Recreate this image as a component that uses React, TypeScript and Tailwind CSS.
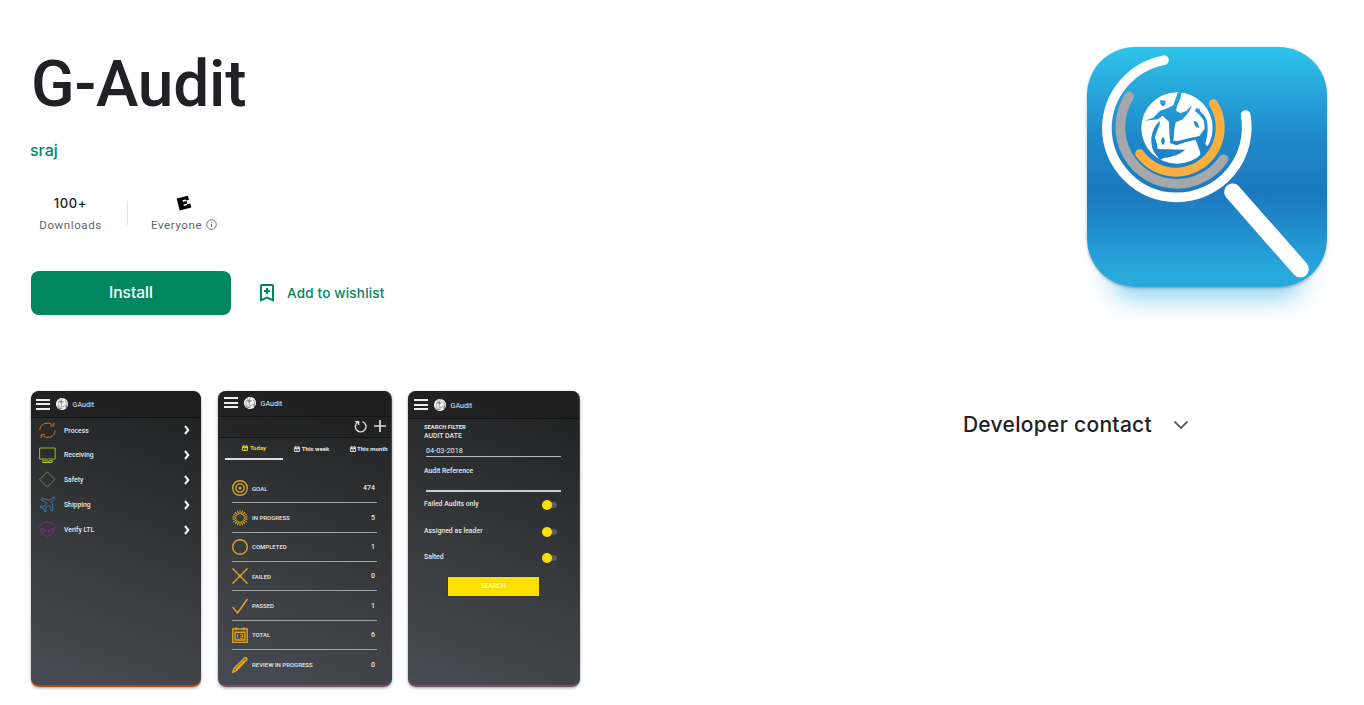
import type { ReactNode } from "react";
import { ChevronDown } from "lucide-react";

const GLOBE_CUTS = [
  "M44 122 L70 113 L90 92 L108 86 L130 76 L143 38 L155 36 Q153 58 142 76 L138 92 L151 99 L169 93 L186 76 Q181 94 158 118 L137 127 L133 150 L130 182 L142 183 Q184 173 208 168 L224 146 L222 124 Q211 104 195 94 L198 84 L210 88 L211 95 Q224 103 230 120 Q238 150 226 190 L228 196 L240 200 L226 224 L212 230 L210 215 L197 179 Q163 186 140 196 L121 190 L118 158 L117 126 L98 107 L84 118 L64 120 Z",
  "M90 122 Q70 138 64 172 Q62 205 76 222 L90 240 L102 234 Q142 230 166 209 L83 207 L81 194 L75 172 L83 148 Q91 136 90 122 Z",
];

function GlobeMask({ id }: { id: string }) {
  return (
    <mask id={id} maskUnits="userSpaceOnUse" x="20" y="20" width="240" height="240">
      <circle cx="141" cy="144" r="107" fill="#fff" />
      <g fill="#000">
        {GLOBE_CUTS.map((d) => (
          <path key={d} d={d} />
        ))}
        <path d="M91 61 Q100 60 107 62 Q108 77 97 79 Q88 71 91 61Z" />
        <path d="M99 170 Q110 182 99 196 Q87 184 99 170Z" />
        <path d="M192 122 Q207 125 207 144 Q190 140 192 122Z" />
      </g>
    </mask>
  );
}

function AppLogo() {
  return (
    <svg viewBox="21 21 720 720" className="block size-60">
      <defs>
        <linearGradient id="sky" x1="0" y1="0" x2="0" y2="1">
          <stop offset="0" stopColor="#2fc5ec" />
          <stop offset="0.14" stopColor="#28addd" />
          <stop offset="0.38" stopColor="#1f88ca" />
          <stop offset="0.61" stopColor="#1c78bf" />
          <stop offset="0.78" stopColor="#2290cd" />
          <stop offset="0.9" stopColor="#27a5d9" />
          <stop offset="1" stopColor="#28a9dc" />
        </linearGradient>
        <GlobeMask id="logo-globe" />
      </defs>
      <rect x="21" y="21" width="720" height="720" fill="url(#sky)" />
      <g fill="none" strokeLinecap="round">
        <path d="M252 60.5 A210 210 0 0 0 80.5 262 A210 210 0 0 0 290.5 472 A210 210 0 0 0 497 225" stroke="#fff" strokeWidth="29" />
        <path d="M148 169.5 A170 170 0 0 0 290.5 431.5 A170 170 0 0 0 430.5 357.5" stroke="#a5a7ab" strokeWidth="29" />
        <path d="M400 191 A134 134 0 0 1 290.5 396.5 A134 134 0 0 1 179 341" stroke="#fbaf3f" strokeWidth="27" />
        <path d="M458 456 L661 687" stroke="#fff" strokeWidth="51" />
      </g>
      <g transform="translate(150 120)">
        <rect x="20" y="20" width="240" height="240" fill="#fff" mask="url(#logo-globe)" />
      </g>
    </svg>
  );
}

function PhoneBar({ id, className }: { id: string; className: string }) {
  return (
    <div className={`flex items-center border-b border-black/40 bg-[#1e1e1f]/60 ${className}`}>
      <div className="flex w-3.5 flex-col gap-[2.5px]">
        <span className="h-[2px] bg-[#eee]" />
        <span className="h-[2px] bg-[#eee]" />
        <span className="h-[2px] bg-[#eee]" />
      </div>
      <svg viewBox="34 37 214 214" className="ml-[6px] size-3">
        <defs>
          <GlobeMask id={id} />
        </defs>
        <circle cx="141" cy="144" r="107" fill="#888" />
        <rect x="20" y="20" width="240" height="240" fill="#f2f2f2" mask={`url(#${id})`} />
      </svg>
      <span className="ml-[4.5px] pt-[2px] text-[7.2px]">GAudit</span>
    </div>
  );
}

function Phone({ width, edge, foot, children }: { width: string; edge: string; foot: string; children: ReactNode }) {
  return (
    <div
      className={`flex h-[296px] flex-col overflow-hidden rounded-lg border-b-2 bg-[linear-gradient(200deg,#1e1f1f_0%,#2e2f31_35%,#3d3f42_68%,#474b54_100%)] leading-none text-[#e8e8e8] shadow-[0_1px_3px_rgba(60,64,67,0.5)] ${width} ${edge} ${foot}`}
    >
      {children}
    </div>
  );
}

const processIcons: { label: string; color: string; art: ReactNode }[] = [
  {
    label: "Process",
    color: "text-[#c9701f]",
    art: (
      <path d="M0.9 8 A7.6 7.2 0 0 1 13.5 2.8 M14.8 0.6 V4.1 H11 M16.1 8 A7.6 7.2 0 0 1 3.5 13.8 M2.2 16 V12.6 H6" />
    ),
  },
  {
    label: "Receiving",
    color: "text-[#b9c41f]",
    art: (
      <>
        <path d="M0.6 1 H16.2 V12 H0.6Z" stroke="#a3b02a" />
        <path d="M3 13.8 H9 M3 15.5 H13 M9 14.7 Q11 12.5 14 14 Q13 16.5 9 14.7" />
      </>
    ),
  },
  { label: "Safety", color: "text-[#5b8a43]", art: <path d="M8.3 0.8 L16 8.5 L8.3 16 L0.8 8.5Z" /> },
  {
    label: "Shipping",
    color: "text-[#2f82ad]",
    art: <path d="M15.5 1 Q14 1 11 4.2 L3 2.5 L1.8 3.7 L8 7.2 L5 10.5 L2 10 L1 11 L4.5 12.5 L6 16 L7 15 L6.7 12 L9.7 9 L13 15 L14.2 13.8 L12.7 6 Q16 3 15.5 1Z" />,
  },
  {
    label: "Verify LTL",
    color: "text-[#79317c]",
    art: (
      <>
        <path d="M8.3 1.2 Q16 1.4 16 7 Q15 12.5 8.3 16 Q1.7 12.5 0.7 7 Q1 1.4 8.3 1.2Z" />
        <path d="M2.5 7.5 Q7 7.5 7.4 11 Q3 11 2.5 7.5Z M14.2 7.5 Q9.7 7.5 9.3 11 Q13.8 11 14.2 7.5Z M6 1.8 Q7 0 9 0.8" />
      </>
    ),
  },
];

function ProcessPhone() {
  return (
    <Phone width="w-[170px]" edge="" foot="border-b-[#b04a10]">
      <PhoneBar id="globe-a" className="h-[27px] pl-[5px]" />
      {processIcons.map((item) => (
        <div key={item.label} className="flex h-[24.8px] items-center pl-2 pr-[11px]">
          <svg viewBox="0 0 17 17" className={`size-[17px] ${item.color}`} fill="none" stroke="currentColor" strokeWidth="1">
            {item.art}
          </svg>
          <span className="ml-2 grow pt-px text-[6.8px] font-medium">{item.label}</span>
          <svg viewBox="0 0 6 10" className="h-[10px] w-[6px]" fill="none" stroke="#f5f5f5" strokeWidth="2">
            <path d="M1 1 L4.3 5 L1 9" />
          </svg>
        </div>
      ))}
    </Phone>
  );
}

const rays = Array.from({ length: 18 }, (_, i) => i * 20);

const auditRows: { label: string; value: string; art: ReactNode }[] = [
  {
    label: "GOAL",
    value: "474",
    art: (
      <>
        <circle cx="8" cy="8" r="7.3" />
        <circle cx="8" cy="8" r="4.1" />
        <circle cx="8" cy="8" r="0.8" />
      </>
    ),
  },
  {
    label: "IN PROGRESS",
    value: "5",
    art: (
      <>
        {rays.map((angle) => (
          <path key={angle} d="M8 0.3 V4.3" transform={`rotate(${angle} 8 8)`} strokeWidth="1" />
        ))}
      </>
    ),
  },
  { label: "COMPLETED", value: "1", art: <circle cx="8" cy="8" r="7.3" /> },
  { label: "FAILED", value: "0", art: <path d="M0.6 0.6 L15.4 15.4 M15.4 0.6 L0.6 15.4" /> },
  { label: "PASSED", value: "1", art: <path d="M0.6 9 L5.6 15 L15.4 1" /> },
  {
    label: "TOTAL",
    value: "6",
    art: (
      <>
        <path d="M0.8 2 H15.2 V15.4 H0.8Z M3.2 5.3 H12.8 V13 H3.2Z M4.2 0 V3.6 M11.8 0 V3.6" />
        <path d="M5.6 7 V11.5 M7.8 7.2 H10.6 V11.3 H7.8 M8.2 9.2 H10.6" strokeWidth="0.9" />
      </>
    ),
  },
  {
    label: "REVIEW IN PROGRESS",
    value: "0",
    art: <path d="M0.7 15.4 L2 11.5 L12.5 1 Q14.8 0 15 2.6 L4.7 13.5Z M3.5 12.5 L13 3 M1 15.3 L3 13.2" />,
  },
];

function TabIcon() {
  return (
    <svg viewBox="0 0 6 6" className="size-[6px]" fill="none" stroke="currentColor" strokeWidth="0.9">
      <path d="M0.5 1.2 H5.5 V5.5 H0.5Z M0.5 2.5 H5.5 M1.7 0 V1.5 M4.3 0 V1.5 M1.8 4 H4.2" />
    </svg>
  );
}

function AuditPhone() {
  return (
    <Phone width="w-[174px]" edge="border-r-[1.5px] border-r-[#174a9c]" foot="border-b-[#765467]">
      <PhoneBar id="globe-b" className="h-[26px] pb-[2px] pl-[6px]" />
      <div className="flex h-[21px] items-center justify-end gap-[7px] border-b border-black/40 bg-[#1e1e1f]/40 pb-[2px] pr-[5px]">
        <svg viewBox="0 0 13 13" className="size-[13px]" fill="none" stroke="#ddd" strokeWidth="1.4">
          <path d="M4 2 A5.3 5.3 0 1 0 8.5 1.6 M1.2 1.6 H4.6 V5" />
        </svg>
        <svg viewBox="0 0 12 12" className="size-3" fill="none" stroke="#ddd" strokeWidth="1.7">
          <path d="M6 0 V12 M0 6 H12" />
        </svg>
      </div>
      <div className="flex h-[22px] text-[6px] font-bold">
        <div className="ml-[7px] flex w-[58px] shrink-0 items-center justify-center gap-[2px] border-b-2 border-[#ddd] text-[#f2d90f]">
          <TabIcon />
          Today
        </div>
        <div className="flex w-[57px] shrink-0 items-center justify-center gap-[2px] whitespace-nowrap">
          <TabIcon />
          This week
        </div>
        <div className="flex shrink-0 items-center gap-[1px] whitespace-nowrap pl-[10px]">
          <TabIcon />
          This month
        </div>
      </div>
      <div className="ml-[14px] mr-[14px] mt-[14px] flex flex-col">
        {auditRows.map((row, i) => (
          <div
            key={row.label}
            className={`flex h-[29.35px] items-center ${i < auditRows.length - 1 ? "border-b border-[#a0a1a3]" : ""}`}
          >
            <svg viewBox="0 0 16 16" className="size-4" fill="none" stroke="#dfa522" strokeWidth="1.4">
              {row.art}
            </svg>
            <span className="ml-[4px] grow pt-px text-[6px] font-medium">{row.label}</span>
            <span className="pr-[2px] pt-px text-[7px] font-medium">{row.value}</span>
          </div>
        ))}
      </div>
    </Phone>
  );
}

function SearchPhone() {
  return (
    <Phone width="w-[172px]" edge="border-r-[1.5px] border-r-[#174a9c]" foot="border-b-[#765467]">
      <PhoneBar id="globe-c" className="h-[28px] pl-[6px]" />
      <div className="flex flex-col pl-4 pr-[18px] pt-[4px] text-[6.9px] font-medium">
        <span className="text-[5.8px] font-bold leading-[8px]">SEARCH FILTER</span>
        <span className="mt-px leading-[9px]">AUDIT DATE</span>
        <div className="ml-[2px] mt-[4px] h-[12px] border-b border-[#bbb] text-[7.3px] font-normal leading-[12px]">04-03-2018</div>
        <span className="mt-[9px] leading-[10px]">Audit Reference</span>
        <div className="ml-[2px] mt-[14px] h-[2px] bg-[#ccc]" />
        <div className="-mt-px flex flex-col">
          {["Failed Audits only", "Assigned as leader", "Salted"].map((label) => (
            <div key={label} className="flex h-[26.7px] items-center">
              <span className="grow">{label}</span>
              <span className="mr-1 mt-px flex h-[6px] w-[15px] items-center rounded-full bg-[#5c5c5f]">
                <span className="size-[10px] shrink-0 rounded-full bg-[#fbdf05]" />
              </span>
            </div>
          ))}
        </div>
        <div className="ml-6 mt-[6px] flex h-[19px] w-[91px] items-center justify-center bg-[#fee000] text-[6.6px] text-[#fffbe0] shadow-[0_0_1px_#222]">
          SEARCH
        </div>
      </div>
    </Phone>
  );
}

export default function App() {
  return (
    <main className="h-[705px] overflow-hidden bg-white font-[Roboto,sans-serif] text-[#202124]">
      <header className="flex items-start justify-between pl-[31px] pr-[37px] pt-[47px]">
        <div className="flex flex-col items-start">
          <h1 className="mt-0.5 text-[64px] font-medium leading-[72px] tracking-[-0.2px]">G-Audit</h1>
          <a className="-ml-px mt-[17px] font-[Inter,sans-serif] text-[16px] font-medium leading-6 text-[#01875f]">sraj</a>
          <div className="mt-[31px] flex items-center">
            <div className="flex w-[78px] flex-col items-center pl-px">
              <span className="font-[Inter,sans-serif] text-[13px] font-medium leading-5 tracking-[0.6px]">100+</span>
              <span className="mt-1 text-[11.5px] leading-4 tracking-[0.6px] text-[#5f6368]">Downloads</span>
            </div>
            <div className="ml-[18px] h-6 w-px bg-[#e3e4e5]" />
            <div className="ml-[23px] flex flex-col items-center">
              <div className="flex h-5 items-center">
                <svg viewBox="0 0 16 16" className="size-4">
                  <path
                    d="M2 1.8 H13.6 V6 H10.6 V5 H7.2 V6.7 H11 V9.3 H7.2 V11 H10.6 V9.9 H14 V14.2 H2 Z"
                    transform="rotate(-14 8 8)"
                    fill="#000"
                  />
                </svg>
              </div>
              <div className="mt-1 flex items-center gap-[4px] text-[11.5px] leading-4 tracking-[0.6px] text-[#5f6368]">
                Everyone
                <svg viewBox="0 0 12 12" className="mb-px size-[11px]" fill="none" stroke="#5f6368" strokeWidth="1">
                  <circle cx="6" cy="6" r="5.2" />
                  <path d="M6 5.3 V8.8 M6 3.1 V4.2" />
                </svg>
              </div>
            </div>
          </div>
          <div className="mt-[38px] flex items-center font-[Inter,sans-serif] font-medium">
            <button className="h-11 w-[200px] rounded-lg bg-[#01875f] text-[15.5px] text-white">Install</button>
            <button className="ml-[29px] flex items-center text-[13.5px] text-[#01875f]">
              <svg viewBox="0 0 14 18" className="h-[18px] w-[14px]" fill="none" stroke="#01875f" strokeWidth="2">
                <path d="M1 16.2 V2 Q1 1 2 1 H12 Q13 1 13 2 V16.2 L7 13.6 Z" />
                <path d="M7 4 V10 M4 7 H10" />
              </svg>
              <span className="ml-[13px] tracking-[0.2px]">Add to wishlist</span>
            </button>
          </div>
        </div>
        <div className="size-60 overflow-hidden rounded-[48px] shadow-[0_1px_3px_rgba(60,64,67,0.4),0_36px_24px_-24px_rgba(41,170,222,0.5)]">
          <AppLogo />
        </div>
      </header>
      <div className="mt-[76px] flex items-start justify-between pl-[31px] pr-[171px]">
        <div className="flex gap-4">
          <ProcessPhone />
          <div className="flex gap-4 pl-px">
            <AuditPhone />
            <SearchPhone />
          </div>
        </div>
        <button className="mt-[18px] flex items-center">
          <span className="font-[Inter,sans-serif] text-[21px] font-medium leading-8 tracking-[0.3px]">Developer contact</span>
          <ChevronDown className="ml-[17px] size-6 text-[#5f6368]" strokeWidth={1.8} />
        </button>
      </div>
    </main>
  );
}
